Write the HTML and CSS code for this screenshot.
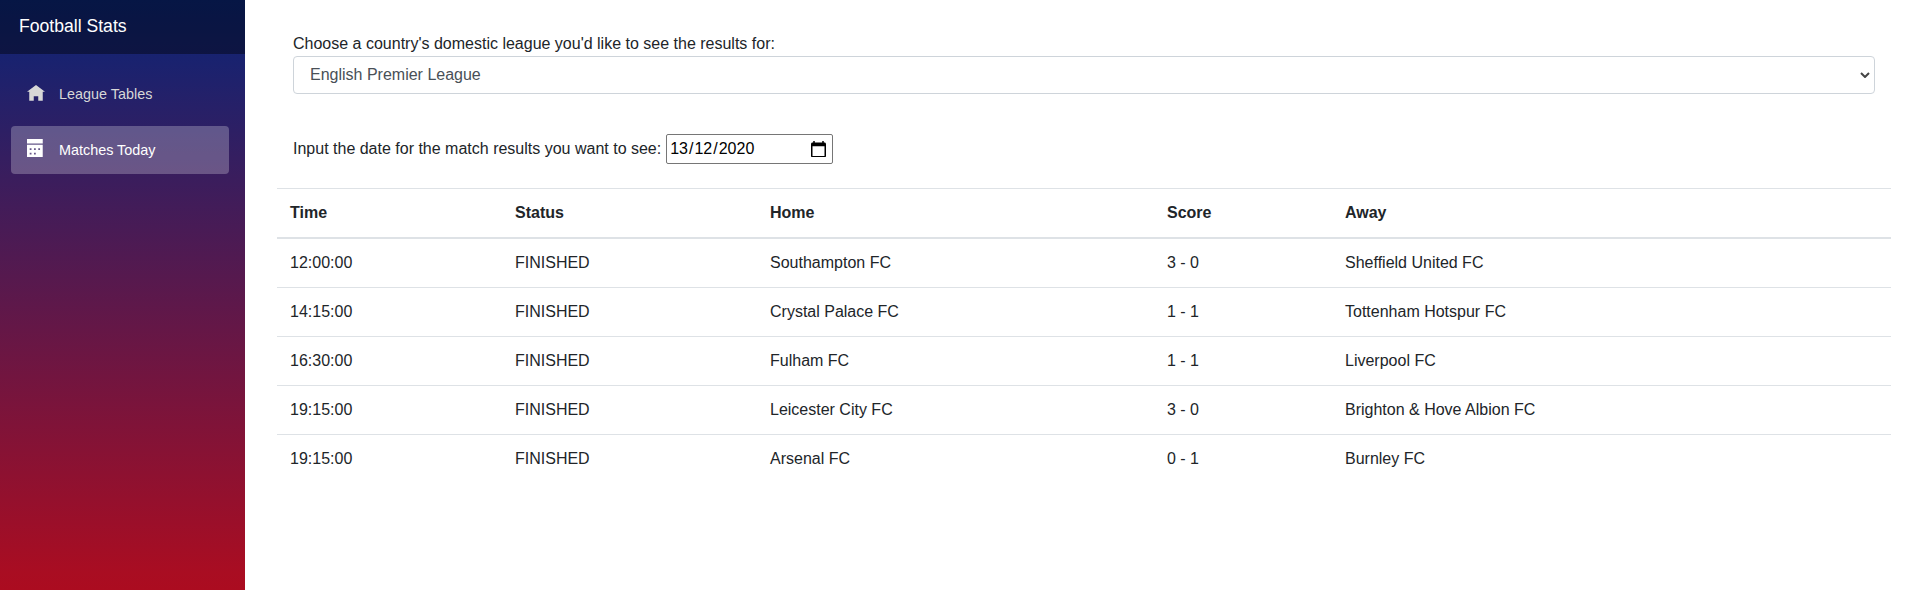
FILE: index.html
```html
<!DOCTYPE html>
<html lang="en">
<head>
<meta charset="utf-8">
<title>Football Stats</title>
<link rel="stylesheet" href="styles.css">
</head>
<body>
<div class="app">
  <aside class="sidebar">
    <div class="brand">Football Stats</div>
    <nav class="nav">
      <a class="nav-link"><svg class="icon" viewBox="0 0 8 8"><path d="M4 0l-4 3h1v4h2v-2h2v2h2v-4.03l1 .03-4-3z"/></svg>League Tables</a>
      <a class="nav-link active"><svg class="icon" viewBox="0 0 8 8"><path d="M0 0v2h7v-2h-7zm0 2.500v5.410c0 .05.04.09.09.09h6.810c.05 0 .09-.04.09-.09v-5.410h-7zm1.200 1.600h.8v.8h-.8v-.8zm1.900 0h.8v.8h-.8v-.8zm1.900 0h.8v.8h-.8v-.8zm-3.800 2h.8v.8h-.8v-.8zm1.900 0h.8v.8h-.8v-.8z"/></svg>Matches Today</a>
    </nav>
  </aside>
  <main class="main">
    <div class="league">
      <label>Choose a country's domestic league you'd like to see the results for:</label>
      <div class="select"><span>English Premier League</span><svg class="chevron" viewBox="0 0 10 6"><path d="M1 1l4 4 4-4"/></svg></div>
    </div>
    <div class="date-row"><label>Input the date for the match results you want to see:</label>
      <div class="date"><span>13<i>/</i>12<i>/</i>2020</span><svg class="cal" viewBox="2 1 20 22"><path d="M20 3h-1V1h-2v2H7V1H5v2H4c-1.100 0-2 .9-2 2v16c0 1.100.9 2 2 2h16c1.100 0 2-.9 2-2V5c0-1.100-.9-2-2-2zm0 18H4V8h16v13z"/></svg></div>
    </div>
    <table class="table">
      <colgroup><col class="c1"><col class="c2"><col class="c3"><col class="c4"><col></colgroup>
      <thead><tr><th>Time</th><th>Status</th><th>Home</th><th>Score</th><th>Away</th></tr></thead>
      <tbody>
        <tr><td>12:00:00</td><td>FINISHED</td><td>Southampton FC</td><td>3 - 0</td><td>Sheffield United FC</td></tr>
        <tr><td>14:15:00</td><td>FINISHED</td><td>Crystal Palace FC</td><td>1 - 1</td><td>Tottenham Hotspur FC</td></tr>
        <tr><td>16:30:00</td><td>FINISHED</td><td>Fulham FC</td><td>1 - 1</td><td>Liverpool FC</td></tr>
        <tr><td>19:15:00</td><td>FINISHED</td><td>Leicester City FC</td><td>3 - 0</td><td>Brighton &amp; Hove Albion FC</td></tr>
        <tr><td>19:15:00</td><td>FINISHED</td><td>Arsenal FC</td><td>0 - 1</td><td>Burnley FC</td></tr>
      </tbody>
    </table>
  </main>
</div>
</body>
</html>
```
FILE: styles.css
```css
* { box-sizing: border-box; }
body { margin: 0; background: #fff; color: #212529; font: 16px/24px "Liberation Sans", Arial, sans-serif; }
.app { display: flex; height: 590px; overflow: hidden; }
.sidebar { width: 245px; flex: none; background: linear-gradient(180deg, #0b2573 0%, #19226f 10%, #a90d22 97%, #ab0c20 100%); }
.brand { height: 54px; padding: 14px 19px; background: rgba(0,0,0,.4); color: #fff; font-size: 17.6px; }
.nav { padding: 16px 16px 0 11px; display: flex; flex-direction: column; gap: 8px; }
.nav-link { height: 48px; display: flex; align-items: center; padding-left: 16px; border-radius: 4px; color: #d7d7d7; font-size: 14.4px; }
.active { background: rgba(255,255,255,.25); color: #fff; }
.icon { width: 18px; height: 18px; margin-right: 14px; fill: currentColor; }
.active .icon { margin-bottom: 4px; }
.main { flex: 1; padding: 32px 24px 0 32px; }
.league { padding: 0 16px; }
.league label { display: block; }
.select { height: 38px; border: 1px solid #ced4da; border-radius: 4px; padding: 0 4px 0 16px; display: flex; align-items: center; justify-content: space-between; color: #495057; }
.chevron { width: 10px; height: 6px; fill: none; stroke: #444; stroke-width: 2; }
.date-row { margin: 40px 16px 24px; display: flex; align-items: center; gap: 5px; }
.date { width: 167px; height: 30px; border: 1px solid #767676; border-radius: 2px; display: flex; align-items: center; justify-content: space-between; padding: 0 6px 0 3px; color: #000; }
.date i { font-style: normal; padding: 0 1px; }
.cal { width: 15px; height: 16.5px; }
.table { width: 100%; border-collapse: collapse; table-layout: fixed; }
.c1 { width: 225px; }
.c2 { width: 255px; }
.c3 { width: 397px; }
.c4 { width: 178px; }
th, td { padding: 12px 12px 12px 13px; text-align: left; border-top: 1px solid #dee2e6; }
thead th { border-bottom: 2px solid #dee2e6; }
```
